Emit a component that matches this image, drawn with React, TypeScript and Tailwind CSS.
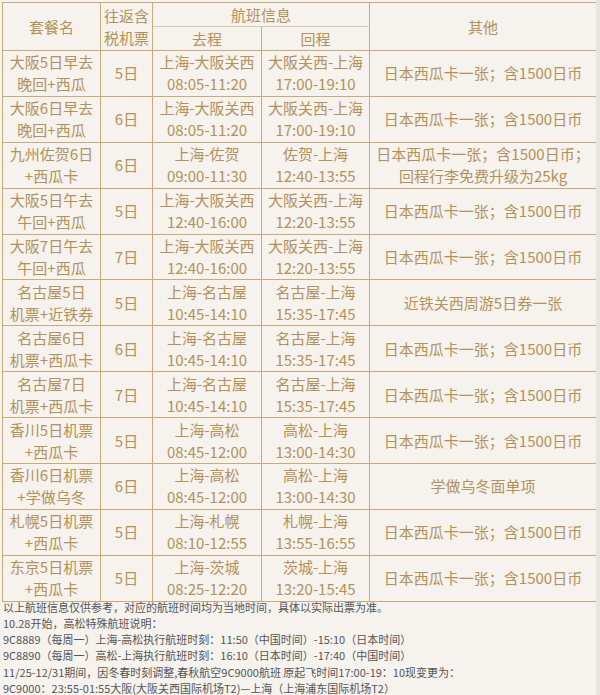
import React from "react";

type Row = {
  name: [string, string];
  days: string;
  go: [string, string];
  back: [string, string];
  other: string[];
};

const XG = "日本西瓜卡一张；含1500日币";

const rows: Row[] = [
  { name: ["大阪5日早去", "晚回+西瓜"], days: "5日", go: ["上海-大阪关西", "08:05-11:20"], back: ["大阪关西-上海", "17:00-19:10"], other: [XG] },
  { name: ["大阪6日早去", "晚回+西瓜"], days: "6日", go: ["上海-大阪关西", "08:05-11:20"], back: ["大阪关西-上海", "17:00-19:10"], other: [XG] },
  { name: ["九州佐贺6日", "+西瓜卡"], days: "6日", go: ["上海-佐贺", "09:00-11:30"], back: ["佐贺-上海", "12:40-13:55"], other: ["日本西瓜卡一张；含1500日币；", "回程行李免费升级为25kg"] },
  { name: ["大阪5日午去", "午回+西瓜"], days: "5日", go: ["上海-大阪关西", "12:40-16:00"], back: ["大阪关西-上海", "12:20-13:55"], other: [XG] },
  { name: ["大阪7日午去", "午回+西瓜"], days: "7日", go: ["上海-大阪关西", "12:40-16:00"], back: ["大阪关西-上海", "12:20-13:55"], other: [XG] },
  { name: ["名古屋5日", "机票+近铁券"], days: "5日", go: ["上海-名古屋", "10:45-14:10"], back: ["名古屋-上海", "15:35-17:45"], other: ["近铁关西周游5日券一张"] },
  { name: ["名古屋6日", "机票+西瓜卡"], days: "6日", go: ["上海-名古屋", "10:45-14:10"], back: ["名古屋-上海", "15:35-17:45"], other: [XG] },
  { name: ["名古屋7日", "机票+西瓜卡"], days: "7日", go: ["上海-名古屋", "10:45-14:10"], back: ["名古屋-上海", "15:35-17:45"], other: [XG] },
  { name: ["香川5日机票", "+西瓜卡"], days: "5日", go: ["上海-高松", "08:45-12:00"], back: ["高松-上海", "13:00-14:30"], other: [XG] },
  { name: ["香川6日机票", "+学做乌冬"], days: "6日", go: ["上海-高松", "08:45-12:00"], back: ["高松-上海", "13:00-14:30"], other: ["学做乌冬面单项"] },
  { name: ["札幌5日机票", "+西瓜卡"], days: "5日", go: ["上海-札幌", "08:10-12:55"], back: ["札幌-上海", "13:55-16:55"], other: [XG] },
  { name: ["东京5日机票", "+西瓜卡"], days: "5日", go: ["上海-茨城", "08:25-12:20"], back: ["茨城-上海", "13:20-15:45"], other: [XG] },
];

const notes = [
  "以上航班信息仅供参考，对应的航班时间均为当地时间，具体以实际出票为准。",
  "10.28开始，高松特殊航班说明：",
  "9C8889（每周一）上海-高松执行航班时刻：11:50（中国时间）-15:10（日本时间）",
  "9C8890（每周一）高松-上海执行航班时刻：16:10（日本时间）-17:40（中国时间）",
  "11/25-12/31期间，因冬春时刻调整,春秋航空9C9000航班 原起飞时间17:00-19：10现变更为：",
  "9C9000：23:55-01:55大阪(大阪关西国际机场T2)—上海（上海浦东国际机场T2）",
];

const cell = "border border-[#c9ab7a] text-center align-middle p-0 leading-[22px]";
const hcell = "border border-[#c9ab7a] text-center align-middle p-0 leading-[22px] font-normal";

function Two({ lines }: { lines: string[] }) {
  return (
    <>
      {lines.map((l, i) => (
        <div key={i} className="whitespace-nowrap">{l}</div>
      ))}
    </>
  );
}

export default function App() {
  return (
    <div
      className="w-[600px] h-[695px] overflow-hidden bg-[#f6f2ee] flex"
      style={{ fontFamily: '"Noto Sans CJK SC", "Noto Sans", sans-serif' }}
    >
      <div className="w-[596px] pl-[2px] pt-[2px]">
        <table className="table-fixed border-collapse w-[594px] text-[15px] text-[#b39158] border border-[#c4a472]">
          <colgroup>
            <col className="w-[98px]" />
            <col className="w-[52px]" />
            <col className="w-[109px]" />
            <col className="w-[108px]" />
            <col className="w-[227px]" />
          </colgroup>
          <thead>
            <tr className="h-[24px]">
              <th rowSpan={2} className={hcell}>套餐名</th>
              <th rowSpan={2} className={hcell}>
                <Two lines={["往返含", "税机票"]} />
              </th>
              <th colSpan={2} className={`${hcell} border-b-[#d9c7a8]`}>航班信息</th>
              <th rowSpan={2} className={hcell}>其他</th>
            </tr>
            <tr className="h-[24px]">
              <th className={hcell}>去程</th>
              <th className={hcell}>回程</th>
            </tr>
          </thead>
          <tbody>
            {rows.map((r, i) => (
              <tr key={i} className="h-[45.9px]">
                <td className={cell}><Two lines={r.name} /></td>
                <td className={cell}>{r.days}</td>
                <td className={cell}><Two lines={r.go} /></td>
                <td className={cell}><Two lines={r.back} /></td>
                <td className={cell}><Two lines={r.other} /></td>
              </tr>
            ))}
          </tbody>
        </table>
        <div className="-mt-[3px] pl-[1px] text-[11px] leading-[16.2px] text-[#555555]">
          {notes.map((n, i) => (
            <div key={i} className="whitespace-nowrap">{n}</div>
          ))}
        </div>
      </div>
      <div className="w-[4px] h-full bg-[#e8e4df]" />
    </div>
  );
}
